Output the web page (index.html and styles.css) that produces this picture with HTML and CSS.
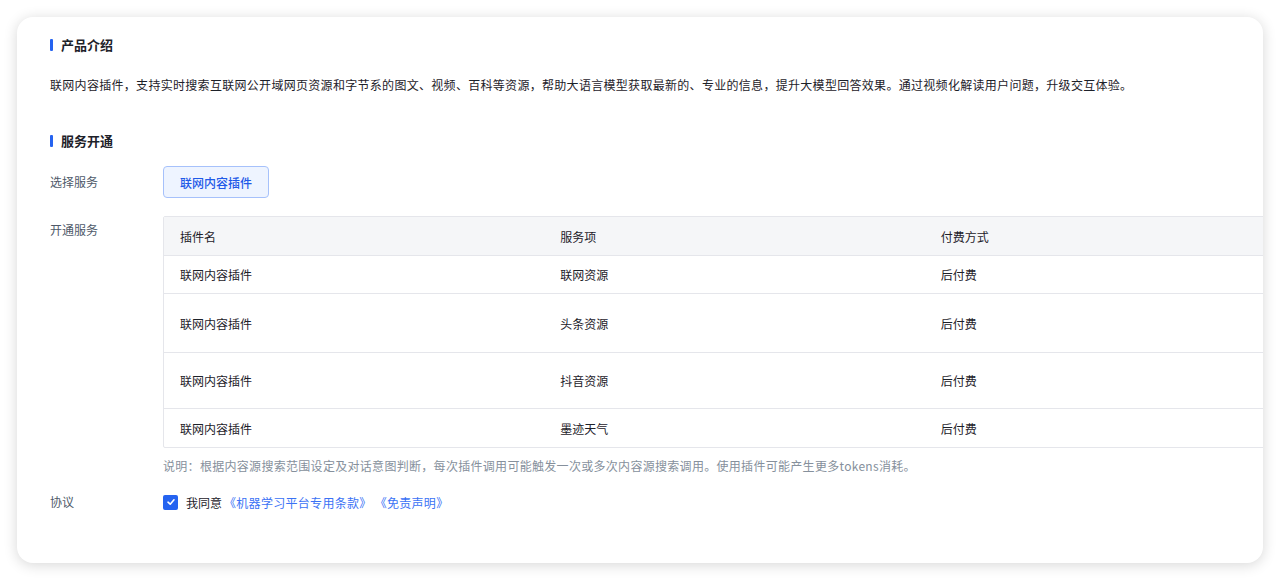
FILE: index.html
```html
<!DOCTYPE html>
<html lang="zh-CN">
<head>
  <meta charset="UTF-8">
  <meta name="viewport" content="width=device-width, initial-scale=1.0">
  <title>联网内容插件</title>
  <link rel="stylesheet" href="styles.css">
</head>
<body>
  <div class="card">
    <!-- 产品介绍 -->
    <h2 class="section-title">产品介绍</h2>
    <p class="intro">联网内容插件，支持实时搜索互联网公开域网页资源和字节系的图文、视频、百科等资源，帮助大语言模型获取最新的、专业的信息，提升大模型回答效果。通过视频化解读用户问题，升级交互体验。</p>

    <!-- 服务开通 -->
    <h2 class="section-title second">服务开通</h2>

    <div class="form-row select-row">
      <div class="form-label">选择服务</div>
      <div class="form-body">
        <button class="service-btn">联网内容插件</button>
      </div>
    </div>

    <div class="form-row table-row">
      <div class="form-label">开通服务</div>
      <div class="form-body">
        <div class="table-wrap">
          <table>
            <thead>
              <tr><th>插件名</th><th>服务项</th><th>付费方式</th></tr>
            </thead>
            <tbody>
              <tr class="row-a"><td>联网内容插件</td><td>联网资源</td><td>后付费</td></tr>
              <tr class="row-b"><td>联网内容插件</td><td>头条资源</td><td>后付费</td></tr>
              <tr class="row-c"><td>联网内容插件</td><td>抖音资源</td><td>后付费</td></tr>
              <tr class="row-d"><td>联网内容插件</td><td>墨迹天气</td><td>后付费</td></tr>
            </tbody>
          </table>
        </div>
        <p class="note">说明：根据内容源搜索范围设定及对话意图判断，每次插件调用可能触发一次或多次内容源搜索调用。使用插件可能产生更多tokens消耗。</p>
      </div>
    </div>

    <div class="form-row agree-row">
      <div class="form-label">协议</div>
      <div class="form-body">
        <label class="agree">
          <span class="checkbox">
            <svg width="10" height="10" viewBox="0 0 10 10"><path d="M2 5.2 L4.2 7.2 L8 2.8" fill="none" stroke="#fff" stroke-width="1.6" stroke-linecap="round" stroke-linejoin="round"/></svg>
          </span>
          <span class="agree-text">我同意</span>
          <a href="#" class="link first">《机器学习平台专用条款》</a>
          <a href="#" class="link">《免责声明》</a>
        </label>
      </div>
    </div>
  </div>
</body>
</html>
```

FILE: styles.css
```css
body {
  margin: 0;
  background: #fff;
  font-family: "Noto Sans CJK SC", "Noto Sans", sans-serif;
  font-size: 12px;
  color: #1d2129;
}

.card {
  margin: 17px;
  height: 546px;
  box-sizing: border-box;
  padding: 18px 0 0 33px;
  background: #fff;
  border-radius: 16px;
  box-shadow: 0 2px 14px rgba(0, 0, 0, 0.16);
  overflow: hidden;
}

.section-title {
  position: relative;
  margin: 0;
  padding-left: 11px;
  font-size: 13px;
  line-height: 20px;
  font-weight: 600;
  color: #1d2129;
}

.section-title::before {
  content: "";
  position: absolute;
  left: 0;
  top: 4px;
  width: 3px;
  height: 12px;
  background: #2563f0;
  border-radius: 1px;
}

.section-title.second {
  margin-top: 36px;
}

.intro {
  margin: 20px 0 0;
  letter-spacing: 0.3px;
  line-height: 20px;
  white-space: nowrap;
}

.form-row {
  display: flex;
}

.form-label {
  width: 113px;
  flex-shrink: 0;
  color: #4e5969;
  line-height: 20px;
}

.form-body {
  flex: 1;
  min-width: 0;
}

.select-row {
  margin-top: 15px;
}

.select-row .form-label {
  line-height: 31px;
}

.service-btn {
  height: 32px;
  padding: 0 16px;
  font-family: inherit;
  font-size: 12px;
  font-weight: 500;
  color: #1f5ae8;
  background: #eef4ff;
  border: 1px solid #a6c1fb;
  border-radius: 4px;
  cursor: pointer;
}

.table-row {
  margin-top: 18px;
}

.table-row .form-label {
  padding-top: 4px;
}

.table-wrap {
  width: 1141px;
  border: 1px solid #e5e6eb;
  border-radius: 2px;
}

table {
  width: 100%;
  border-collapse: collapse;
  table-layout: fixed;
}

th {
  height: 38px;
  padding: 0 16px;
  text-align: left;
  font-weight: 400;
  color: #1d2129;
  background: #f5f6f8;
}

td {
  padding: 0 16px;
  border-top: 1px solid #e5e6eb;
  color: #1d2129;
}

.row-a td { height: 37px; }
.row-b td { height: 58px; }
.row-c td { height: 55px; }
.row-d td { height: 38px; }

.note {
  margin: 8px 0 0;
  letter-spacing: 0.3px;
  line-height: 20px;
  color: #86909c;
  white-space: nowrap;
}

.agree-row {
  margin-top: 16px;
}

.agree {
  display: flex;
  align-items: center;
  height: 20px;
}

.checkbox {
  display: inline-flex;
  align-items: center;
  justify-content: center;
  width: 15px;
  height: 15px;
  margin-right: 8px;
  background: #2563f0;
  border-radius: 2px;
}

.agree-text {
  color: #1d2129;
}

.link {
  color: #3a72f5;
  letter-spacing: 0.3px;
  text-decoration: none;
}

.link.first {
  margin: 0 3px 0 2px;
}
```
